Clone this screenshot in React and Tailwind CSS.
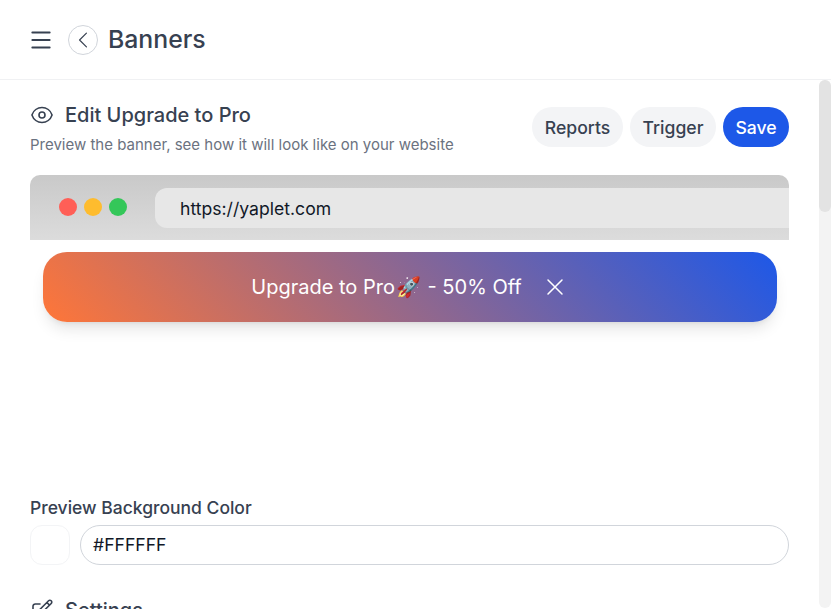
import React from "react";
import { Menu } from "lucide-react";
import { HiOutlineChevronLeft, HiOutlineEye, HiOutlineXMark, HiOutlinePencilSquare } from "react-icons/hi2";

export default function App() {
  return (
    <div className="h-[609px] w-[831px] overflow-hidden bg-white flex flex-col text-[#374151] font-['Inter',sans-serif]">
      <header className="h-20 shrink-0 border-b border-[#f0f1f3] flex items-center pl-[28px]">
        <Menu size={26} strokeWidth={1.8} className="text-[#374151]" />
        <button className="ml-[14px] w-[30px] h-[30px] rounded-full border border-[#d1d5db] flex items-center justify-center">
          <HiOutlineChevronLeft size={22} strokeWidth={1.3} />
        </button>
        <h1 className="ml-[10px] text-[24.8px] font-medium leading-8 -mt-px">Banners</h1>
      </header>
      <div className="flex flex-1 min-h-0">
        <main className="flex-1 min-w-0 px-[30px] overflow-hidden">
          <div className="flex justify-between items-start pt-[27px]">
            <div className="-mt-[5px]">
              <div className="flex items-center gap-[11px]">
                <HiOutlineEye size={24} strokeWidth={1.6} />
                <h2 className="text-[20px] font-medium leading-[26px]">Edit Upgrade to Pro</h2>
              </div>
              <p className="mt-[7px] text-[15px] leading-5 text-[#6b7280]">Preview the banner, see how it will look like on your website</p>
            </div>
            <div className="flex gap-[7px]">
              <button className="h-10 w-[91px] pt-[2px] rounded-full bg-[#f3f4f6] font-medium text-[17.6px]">Reports</button>
              <button className="h-10 w-[86px] pt-[2px] rounded-full bg-[#f3f4f6] font-medium text-[17.6px]">Trigger</button>
              <button className="h-10 w-[66px] pt-[2px] rounded-full bg-[#1d58e8] text-white font-medium text-[17.6px]">Save</button>
            </div>
          </div>
          <div className="mt-5 h-[65px] rounded-t-[10px] bg-gradient-to-b from-[#c9c9c9] to-[#dcdcdc] flex items-center">
            <div className="flex gap-[7px] pl-[29px] w-[125px] -mt-[2px] shrink-0">
              <span className="w-[18px] h-[18px] rounded-full bg-[#ff5f57]" />
              <span className="w-[18px] h-[18px] rounded-full bg-[#febc2e]" />
              <span className="w-[18px] h-[18px] rounded-full bg-[#34c759]" />
            </div>
            <div className="flex-1 h-10 pt-[3px] rounded-l-xl bg-[#e7e7e7] flex items-center pl-[25px] text-[#111827] text-[17.6px]">https://yaplet.com</div>
          </div>
          <div className="ml-[13px] mr-[12px] mt-3 h-[70px] rounded-[24px] bg-[linear-gradient(45deg,#ff7638,#1d58e8)] shadow-lg flex items-center justify-center text-white text-[20px]">
            <span>Upgrade to Pro<span className="mx-px">🚀</span> - 50% Off</span>
            <HiOutlineXMark size={28} strokeWidth={1.3} className="ml-[19px]" />
          </div>
          <label className="block mt-[174px] font-medium text-[17.5px] leading-6">Preview Background Color</label>
          <div className="flex gap-[10px] mt-[5px]">
            <div className="w-10 h-10 rounded-xl border border-[#f3f4f6] bg-white" />
            <div className="flex-1 h-10 rounded-full border border-[#d1d5db] flex items-center pl-3 text-[17.6px] text-[#111827]">#FFFFFF</div>
          </div>
          <div className="flex items-center gap-[11px] mt-[32px]">
            <HiOutlinePencilSquare size={24} strokeWidth={1.6} />
            <h2 className="text-[20px] font-medium leading-[26px]">Settings</h2>
          </div>
        </main>
        <div className="w-3 shrink-0 rounded-full bg-[#f3f3f3] h-[528px]">
          <div className="h-[132px] rounded-full bg-[#e3e3e3]" />
        </div>
      </div>
    </div>
  );
}
